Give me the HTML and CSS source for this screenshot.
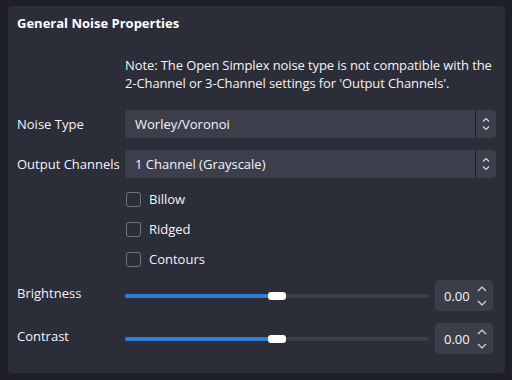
FILE: index.html
```html
<!DOCTYPE html>
<html lang="en">
<head>
    <meta charset="UTF-8">
    <meta name="viewport" content="width=device-width, initial-scale=1.0">
    <title>Noise Properties</title>
    <link rel="stylesheet" href="styles.css">
</head>
<body>
    <div class="panel">
        <h2 class="title">General Noise Properties</h2>

        <div class="row note-row">
            <span></span>
            <p class="note">Note: The Open Simplex noise type is not compatible with the<br>2-Channel or 3-Channel settings for 'Output Channels'.</p>
        </div>

        <div class="row combo-row">
            <label>Noise Type</label>
            <div class="combo">
                <span class="combo-text">Worley/Voronoi</span>
                <span class="combo-btn">
                    <svg width="10" height="14" viewBox="0 0 10 14"><polyline points="2,4.5 5,1.5 8,4.5" /><polyline points="2,9.5 5,12.5 8,9.5" /></svg>
                </span>
            </div>
        </div>

        <div class="row combo-row second">
            <label>Output Channels</label>
            <div class="combo">
                <span class="combo-text">1 Channel (Grayscale)</span>
                <span class="combo-btn">
                    <svg width="10" height="14" viewBox="0 0 10 14"><polyline points="2,4.5 5,1.5 8,4.5" /><polyline points="2,9.5 5,12.5 8,9.5" /></svg>
                </span>
            </div>
        </div>

        <div class="checks">
            <div class="check"><span class="box"></span>Billow</div>
            <div class="check"><span class="box"></span>Ridged</div>
            <div class="check"><span class="box"></span>Contours</div>
        </div>

        <div class="row slider-row">
            <label>Brightness</label>
            <div class="slider-wrap">
                <div class="slider">
                    <span class="fill"></span>
                    <span class="handle"></span>
                    <span class="rest"></span>
                </div>
                <div class="spin">
                    <span>0.00</span>
                    <svg width="12" height="22" viewBox="0 0 12 22"><polyline points="2,6 6,2 10,6" /><polyline points="2,16 6,20 10,16" /></svg>
                </div>
            </div>
        </div>

        <div class="row slider-row second">
            <label>Contrast</label>
            <div class="slider-wrap">
                <div class="slider">
                    <span class="fill"></span>
                    <span class="handle"></span>
                    <span class="rest"></span>
                </div>
                <div class="spin">
                    <span>0.00</span>
                    <svg width="12" height="22" viewBox="0 0 12 22"><polyline points="2,6 6,2 10,6" /><polyline points="2,16 6,20 10,16" /></svg>
                </div>
            </div>
        </div>
    </div>
</body>
</html>
```

FILE: styles.css
```css
body {
    margin: 0;
    background-color: #1e1f27;
    font-family: "Open Sans", sans-serif;
    font-size: 13px;
    color: #f4f4f6;
}
.panel {
    margin: 6px 7px 0 8px;
    height: 367px;
    box-sizing: border-box;
    padding: 8px 9px 0 9px;
    background-color: #2b2d38;
    border-radius: 4px;
}
.title {
    margin: 0;
    font-size: 13px;
    font-weight: bold;
    line-height: 18px;
    color: #fff;
}
.row {
    display: grid;
    grid-template-columns: 108px 1fr;
    align-items: center;
}
.note-row {
    margin-top: 24px;
}
.note {
    margin: 0;
    line-height: 18px;
    white-space: nowrap;
    letter-spacing: -0.1px;
}
.combo-row {
    margin-top: 18px;
}
.combo-row.second {
    margin-top: 12px;
}
.combo {
    display: flex;
    height: 28px;
    background-color: #3c3f4b;
    border-radius: 4px;
}
.combo-text {
    flex: 1;
    padding-left: 10px;
    line-height: 28px;
}
.combo-btn {
    width: 20px;
    border-left: 1px solid #1c1d24;
    display: flex;
    align-items: center;
    justify-content: center;
}
.combo-btn svg polyline,
.spin svg polyline {
    fill: none;
    stroke: #d8d9de;
    stroke-width: 1.2;
}
.checks {
    margin-top: 6px;
    padding-left: 109px;
}
.check {
    display: flex;
    align-items: center;
    height: 30px;
}
.box {
    width: 15px;
    height: 15px;
    box-sizing: border-box;
    border: 1.5px solid #72747e;
    border-radius: 3px;
    margin-right: 8px;
}
.slider-row {
    margin-top: 6px;
}
.slider-row.second {
    margin-top: 12px;
}
.slider-row label {
    margin-bottom: 5px;
}
.slider-wrap {
    display: flex;
    align-items: center;
}
.slider {
    width: 304px;
    display: flex;
    align-items: center;
}
.fill {
    flex: 1;
    height: 4px;
    background-color: #2f7fd8;
    border-radius: 2px 0 0 2px;
}
.handle {
    width: 18px;
    height: 8px;
    background-color: #fff;
    border-radius: 3px;
}
.rest {
    flex: 1;
    height: 4px;
    background-color: #3c3f4b;
    border-radius: 0 2px 2px 0;
}
.spin {
    margin-left: 6px;
    width: 58px;
    height: 31px;
    box-sizing: border-box;
    padding: 0 5px 0 9px;
    background-color: #3b3e49;
    border-radius: 4px;
    display: flex;
    align-items: center;
    justify-content: space-between;
}
```
